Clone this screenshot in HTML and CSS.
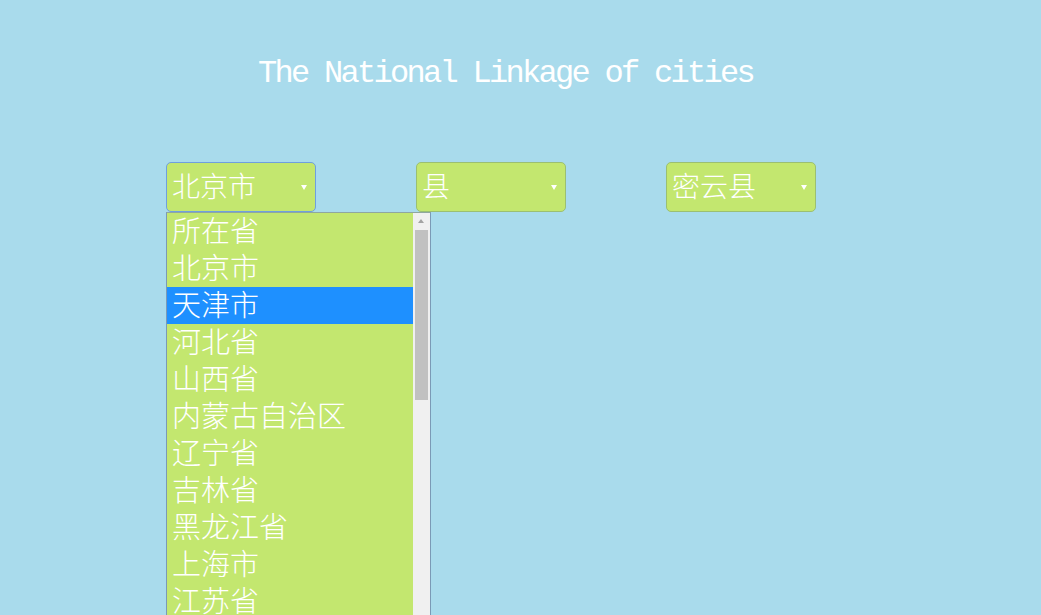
FILE: index.html
```html
<!DOCTYPE html>
<html lang="zh">
<head>
<meta charset="utf-8">
<title>The National Linkage of cities</title>
<link rel="stylesheet" href="styles.css">
</head>
<body>
<div class="page">
  <h1 class="title">The National Linkage of cities</h1>
  <div class="selects">
    <div class="picker">
      <div class="select focused"><span class="value">北京市</span><span class="arrow"></span></div>
      <div class="menu">
        <ul class="options">
          <li>所在省</li>
          <li>北京市</li>
          <li class="active">天津市</li>
          <li>河北省</li>
          <li>山西省</li>
          <li>内蒙古自治区</li>
          <li>辽宁省</li>
          <li>吉林省</li>
          <li>黑龙江省</li>
          <li>上海市</li>
          <li>江苏省</li>
        </ul>
        <div class="scrollbar">
          <span class="up"></span>
          <span class="thumb"></span>
        </div>
      </div>
    </div>
    <div class="picker">
      <div class="select"><span class="value">县</span><span class="arrow"></span></div>
    </div>
    <div class="picker">
      <div class="select"><span class="value">密云县</span><span class="arrow"></span></div>
    </div>
  </div>
</div>
</body>
</html>
```
FILE: styles.css
```css
html, body {
  margin: 0;
  padding: 0;
  height: 100%;
  overflow: hidden;
}
body {
  background: #a9dbec;
  font-family: "Noto Sans CJK SC", sans-serif;
}
.page {
  padding-top: 56px;
}
.title {
  margin: 0;
  padding-left: 258px;
  font-family: "Liberation Mono", monospace;
  font-weight: normal;
  font-size: 32px;
  letter-spacing: -2.7px;
  line-height: 36px;
  color: #ffffff;
  white-space: nowrap;
}
.selects {
  display: flex;
  gap: 100px;
  padding-left: 166px;
  margin-top: 70px;
}
.picker {
  position: relative;
  width: 150px;
}
.select {
  box-sizing: border-box;
  width: 150px;
  height: 50px;
  background: #c3e76f;
  border: 1px solid #9bbf72;
  border-radius: 5px;
  display: flex;
  align-items: center;
  padding: 0 6px 4px 5px;
  color: #fff;
  font-size: 28px;
  font-weight: 300;
}
.select.focused {
  border-color: #6f9fdf;
}
.value {
  flex: 1;
  line-height: 1;
}
.arrow {
  width: 0;
  height: 0;
  border-left: 3px solid transparent;
  border-right: 3px solid transparent;
  border-top: 5px solid #ffffff;
  margin-right: 2px;
  margin-top: 4px;
}
.menu {
  position: absolute;
  left: 0;
  top: 50px;
  width: 265px;
  box-sizing: border-box;
  height: 420px;
  border: 1px solid #7b9ab6;
  border-top-color: #8fa7a0;
  display: flex;
  background: #c3e76f;
}
.options {
  list-style: none;
  margin: 0;
  padding: 0;
  flex: 1;
}
.options li {
  box-sizing: border-box;
  height: 37px;
  line-height: 33px;
  padding-bottom: 4px;
  padding-left: 5px;
  color: #fff;
  font-size: 29px;
  font-weight: 300;
  white-space: nowrap;
}
.options li.active {
  background: #1e90ff;
}
.scrollbar {
  width: 17px;
  background: #f0f0f0;
  position: relative;
}
.up {
  position: absolute;
  left: 5px;
  top: 6px;
  width: 0;
  height: 0;
  border-left: 3.5px solid transparent;
  border-right: 3.5px solid transparent;
  border-bottom: 4px solid #a3a3a3;
}
.thumb {
  position: absolute;
  left: 2px;
  top: 17px;
  width: 13px;
  height: 170px;
  background: #c1c1c1;
}
```
